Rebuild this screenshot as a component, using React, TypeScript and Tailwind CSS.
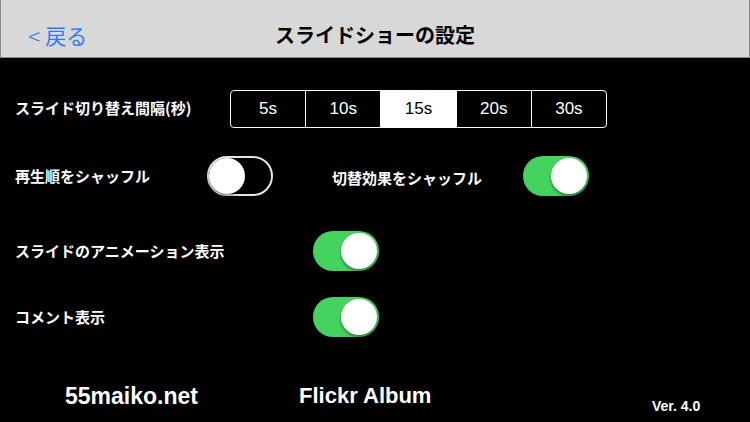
import { useState } from 'react';

const jp = { fontFamily: '"Noto Sans CJK JP", "Noto Sans", sans-serif' };
const latin = { fontFamily: '"Liberation Sans", Arial, sans-serif' };

function Toggle({ on, onChange }: { on: boolean; onChange: () => void }) {
  return (
    <button
      onClick={onChange}
      className={`relative w-[66px] h-[40px] rounded-full shrink-0 ${on ? 'bg-[#44d35e]' : 'bg-black border-2 border-[#e5e5e5]'}`}
    >
      <span
        className={`absolute top-1/2 -translate-y-1/2 w-[36px] h-[36px] rounded-full bg-white shadow-[0_2px_3px_rgba(0,0,0,0.4)] ${on ? 'right-[2px]' : 'left-0'}`}
      />
    </button>
  );
}

export default function App() {
  const intervals = ['5s', '10s', '15s', '20s', '30s'];
  const [interval, setInterval] = useState('15s');
  const [shuffleOrder, setShuffleOrder] = useState(false);
  const [shuffleEffect, setShuffleEffect] = useState(true);
  const [animation, setAnimation] = useState(true);
  const [comment, setComment] = useState(true);

  return (
    <div className="w-[750px] h-[422px] bg-black text-white flex flex-col overflow-hidden" style={jp}>
      {/* Header */}
      <div className="h-[58px] bg-[#d8d8d8] border-x border-b border-[#8a8a8a] pt-[25px] relative shrink-0">
        <button className="absolute left-[27px] top-[24px] text-[#3478f6] text-[21px] leading-none flex items-center gap-[5px]">
          <span className="text-[23px] font-light">&lt;</span>
          <span>戻る</span>
        </button>
        <h1 className="w-full text-center text-[20px] font-bold text-black leading-none">スライドショーの設定</h1>
      </div>

      {/* Settings */}
      <div className="flex flex-col pl-[15px] pt-[32px]">
        <div className="flex items-center h-[37px]">
          <span className="w-[215px] text-[15px] font-bold">スライド切り替え間隔(秒)</span>
          <div className="flex w-[377px] h-[38px] border border-white rounded-[4px] overflow-hidden" style={latin}>
            {intervals.map((v, i) => (
              <button
                key={v}
                onClick={() => setInterval(v)}
                className={`flex-1 text-[17px] ${i > 0 ? 'border-l border-white' : ''} ${interval === v ? 'bg-white text-black' : 'text-white'}`}
              >
                {v}
              </button>
            ))}
          </div>
        </div>

        <div className="flex items-center mt-[29px]">
          <span className="w-[192px] text-[15px] font-bold">再生順をシャッフル</span>
          <Toggle on={shuffleOrder} onChange={() => setShuffleOrder(!shuffleOrder)} />
          <span className="ml-[59px] w-[191px] text-[15px] font-bold mt-[5px]">切替効果をシャッフル</span>
          <Toggle on={shuffleEffect} onChange={() => setShuffleEffect(!shuffleEffect)} />
        </div>

        <div className="flex items-center mt-[35px]">
          <span className="w-[298px] text-[15px] font-bold">スライドのアニメーション表示</span>
          <Toggle on={animation} onChange={() => setAnimation(!animation)} />
        </div>

        <div className="flex items-center mt-[26px]">
          <span className="w-[298px] text-[15px] font-bold">コメント表示</span>
          <Toggle on={comment} onChange={() => setComment(!comment)} />
        </div>
      </div>

      {/* Footer */}
      <div className="flex items-end mt-auto pb-[9px] font-bold" style={latin}>
        <span className="ml-[65px] w-[234px] text-[23px] leading-none mb-[5px]">55maiko.net</span>
        <span className="w-[353px] text-[22px] leading-none mb-[6px]">Flickr Album</span>
        <span className="text-[14px] leading-none">Ver. 4.0</span>
      </div>
    </div>
  );
}
